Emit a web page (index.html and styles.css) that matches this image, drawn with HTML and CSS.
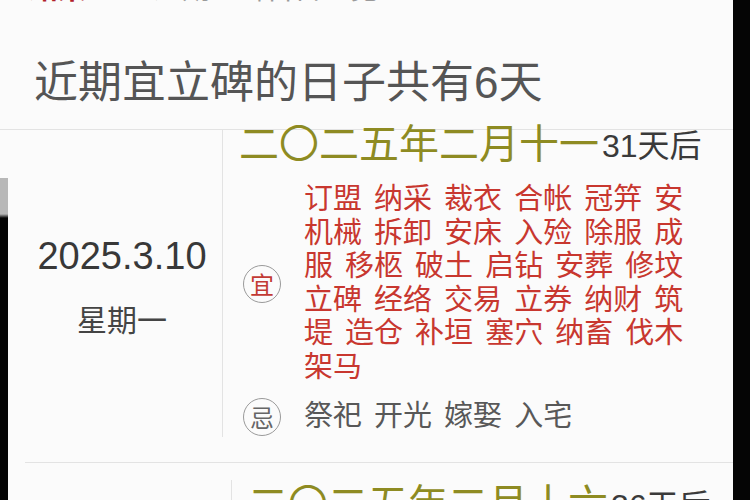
FILE: index.html
```html
<!DOCTYPE html>
<html lang="zh">
<head>
<meta charset="utf-8">
<link rel="stylesheet" href="styles.css">
</head>
<body>
<div class="screen">
  <div class="topcut"><div class="topcut-inner"><span class="topcut-red">结果</span><span class="topcut-gray">：近期立碑吉日一览</span></div></div>
  <h1 class="heading">近期宜立碑的日子共有6天</h1>

  <div class="card">
    <div class="date-col">
      <div class="solar">2025.3.10</div>
      <div class="week">星期一</div>
    </div>
    <div class="info-col">
      <div class="lunar-row"><span class="lunar">二〇二五年二月十一</span><span class="after">31天后</span></div>
      <div class="yiji-row yi-row">
        <span class="badge badge-yi">宜</span>
        <div class="yi-text">
          <span class="line">订盟 纳采 裁衣 合帐 冠笄 安</span>
          <span class="line">机械 拆卸 安床 入殓 除服 成</span>
          <span class="line">服 移柩 破土 启钻 安葬 修坟</span>
          <span class="line">立碑 经络 交易 立券 纳财 筑</span>
          <span class="line">堤 造仓 补垣 塞穴 纳畜 伐木</span>
          <span class="line">架马</span>
        </div>
      </div>
      <div class="yiji-row ji-row">
        <span class="badge badge-ji">忌</span>
        <div class="ji-text">祭祀 开光 嫁娶 入宅</div>
      </div>
    </div>
  </div>

  <div class="card card-next">
    <div class="date-col"></div>
    <div class="info-col">
      <div class="lunar-row"><span class="lunar">二〇二五年二月十六</span><span class="after">36天后</span></div>
    </div>
  </div>

  <div class="edge-right"></div>
  <div class="edge-left"></div>
</div>
</body>
</html>
```

FILE: styles.css
```css
html, body {
  margin: 0;
  padding: 0;
  background: #fbfbfb;
}

.screen {
  position: relative;
  width: 750px;
  height: 500px;
  overflow: hidden;
  background: #fbfbfb;
  font-family: "Liberation Sans", "Noto Sans CJK SC", sans-serif;
}

.topcut {
  height: 6px;
  overflow: hidden;
  padding-left: 30px;
}

.topcut-inner {
  margin-top: -25px;
  font-size: 28px;
  line-height: 30px;
  white-space: nowrap;
}

.topcut-red {
  color: #b0202a;
  font-weight: bold;
}

.topcut-gray {
  color: #9a9a9a;
  margin-left: 40px;
}

.heading {
  margin: 0;
  height: 124px;
  box-sizing: border-box;
  padding: 49px 0 0 34px;
  font-size: 44px;
  line-height: 56px;
  font-weight: normal;
  color: #555;
  border-bottom: 1px solid #e3e3e3;
  width: 733px;
}

.card {
  display: grid;
  grid-template-columns: 223px 1fr;
  width: 733px;
  height: 332px;
  box-sizing: border-box;
}

.card-next {
  height: auto;
  width: 708px;
  margin-left: 25px;
  border-top: 1px solid #e3e3e3;
  grid-template-columns: 207px 1fr;
  padding-top: 17px;
}

.date-col {
  border-right: 1px solid #e3e3e3;
  margin-bottom: 25px;
  display: flex;
  flex-direction: column;
  align-items: center;
  justify-content: center;
  padding-left: 22px;
}

.card-next .date-col {
  margin-bottom: 0;
  min-height: 40px;
}

.solar {
  font-size: 38px;
  line-height: 44px;
  color: #383838;
  margin-top: 4px;
}

.week {
  font-size: 30px;
  line-height: 34px;
  margin-top: 26px;
  color: #444;
}

.info-col {
  padding-left: 16px;
}

.lunar-row {
  display: flex;
  align-items: flex-end;
  height: 34px;
  white-space: nowrap;
}

.lunar {
  font-size: 40px;
  line-height: 40px;
  color: #8e8b22;
  margin-top: -2px;
}

.after {
  font-size: 32px;
  line-height: 36px;
  color: #3a3a3a;
  margin-left: 3px;
}

.card-next .lunar-row {
  padding-top: 10px;
}

.yiji-row {
  display: flex;
  align-items: center;
  padding-left: 4px;
}

.yi-row {
  margin-top: 19px;
}

.ji-row {
  margin-top: 14px;
}

.badge {
  flex: none;
  width: 38px;
  height: 38px;
  box-sizing: border-box;
  border: 1.5px solid #9a9a9a;
  border-radius: 50%;
  display: flex;
  align-items: center;
  justify-content: center;
  font-size: 24px;
  line-height: 1;
  margin-right: 23px;
  font-family: "Noto Sans CJK SC", sans-serif;
}

.badge-yi {
  color: #c23a34;
}

.badge-ji {
  color: #666;
}

.yi-text {
  color: #c8372f;
  font-size: 29px;
  line-height: 33.5px;
  word-spacing: 4px;
  white-space: nowrap;
}

.yi-text .line {
  display: block;
}

.ji-text {
  color: #585858;
  font-size: 29px;
  line-height: 33.5px;
  word-spacing: 4px;
  white-space: nowrap;
}

.edge-right {
  position: absolute;
  top: 0;
  right: 0;
  width: 17px;
  height: 500px;
  background: #050505;
}

.edge-left {
  position: absolute;
  left: 0;
  top: 178px;
  width: 8px;
  height: 322px;
  background: linear-gradient(to bottom, #b8b8b8 0, #b8b8b8 36px, #050505 40px);
}
```
